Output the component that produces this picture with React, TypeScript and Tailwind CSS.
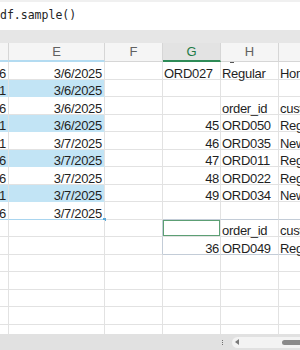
import React from "react";

type Row = {
  d?: string;
  e?: string;
  blue?: boolean;
  g?: string;
  gLeft?: boolean;
  h?: string;
  i?: string;
  active?: boolean;
};

const rows: Row[] = [
  { d: "6", e: "3/6/2025", g: "ORD027", gLeft: true, h: "Regular", i: "Home Decor" },
  { d: "1", e: "3/6/2025", blue: true },
  { d: "6", e: "3/6/2025", h: "order_id", i: "customer_type" },
  { d: "1", e: "3/6/2025", blue: true, g: "45", h: "ORD050", i: "Regular" },
  { d: "1", e: "3/7/2025", g: "46", h: "ORD035", i: "New" },
  { d: "6", e: "3/7/2025", blue: true, g: "47", h: "ORD011", i: "Regular" },
  { d: "6", e: "3/7/2025", g: "48", h: "ORD022", i: "Regular" },
  { d: "1", e: "3/7/2025", blue: true, g: "49", h: "ORD034", i: "New" },
  { d: "6", e: "3/7/2025" },
  { active: true, h: "order_id", i: "customer_type" },
  { g: "36", h: "ORD049", i: "Regular" },
  {},
  {},
  {},
  {},
  {},
];

const txt = "whitespace-nowrap leading-[13px] mb-[-1px]";

function DataRow({ r, idx }: { r: Row; idx: number }) {
  const inSel = idx <= 8;
  const lastSel = idx === 8;
  const boxTop = idx === 8; // row above the output box
  const inBox = idx === 9 || idx === 10;
  const boxBottom = idx === 10;
  const fill = inSel ? (r.blue ? "bg-[#c2e4f5]" : "bg-white") : "bg-white";
  const selBorder = lastSel ? "border-b-[#a9d5ef]" : r.blue ? "border-b-[#c2e4f5]" : "border-b-[#e2e2e2]";
  const rightBorder = boxTop || boxBottom ? "border-b-[#c3ccd7]" : "border-b-[#e2e2e2]";

  return (
    <div className="flex h-[17.5px] shrink-0">
      <div
        className={`w-[9px] shrink-0 border-r border-b border-r-[#e2e2e2] ${selBorder} ${fill} flex items-end justify-end overflow-x-clip pr-[2px]`}
      >
        <span className={txt}>{r.d}</span>
      </div>
      <div
        className={`relative w-[96px] shrink-0 border-r border-b border-r-[#e2e2e2] ${selBorder} ${fill} flex items-end justify-end pr-[2px]`}
      >
        <span className={txt}>{r.e}</span>
        {lastSel && (
          <div className="absolute right-[-2px] bottom-[-2px] w-[3px] h-[3px] bg-[#5aa7d8]" />
        )}
      </div>
      <div
        className={`w-[58px] shrink-0 border-r border-b border-b-[#e2e2e2] ${inBox ? "border-r-[#c3ccd7]" : "border-r-[#e2e2e2]"} bg-white`}
      />
      <div
        className={`w-[58px] shrink-0 border-r border-b border-r-[#e2e2e2] ${rightBorder} flex items-end overflow-x-clip ${r.gLeft ? "justify-start pl-[1px]" : "justify-end pr-[1px]"} ${r.active ? "shadow-[inset_0_0_0_1px_#5c9f74]" : ""}`}
      >
        <span className={txt}>{r.g}</span>
      </div>
      <div
        className={`w-[58px] shrink-0 border-r border-b border-r-[#e2e2e2] ${rightBorder} flex items-end overflow-x-clip pl-[1px]`}
      >
        <span className={txt}>{r.h}</span>
      </div>
      <div className={`flex-1 min-w-0 border-b ${rightBorder} flex items-end overflow-x-clip pl-[1px]`}>
        <span className={txt}>{r.i}</span>
      </div>
    </div>
  );
}

export default function App() {
  return (
    <div className="w-[300px] h-[350px] overflow-hidden flex flex-col bg-white font-['Liberation_Sans',Arial,sans-serif] text-[13px] tracking-[-0.3px] text-[#1f1f1f]">
      {/* formula bar */}
      <div className="h-[30px] shrink-0 bg-white border-t-[2px] border-t-[#f0f0f0]">
        <div className="pt-[6px] font-['DejaVu_Sans_Mono',monospace] text-[11.5px] leading-[14px] tracking-normal text-[#242424] whitespace-nowrap">
          df.sample()
        </div>
      </div>
      <div className="h-[13px] shrink-0 bg-[#e6e6e6]" />

      {/* column headers */}
      <div className="relative z-10 flex h-[19px] shrink-0 bg-[#e6e6e6] text-[13px] tracking-normal text-[#616161]">
        <div className="w-[9px] shrink-0 bg-[#f5f5f5] border-r border-r-[#d6d6d6] border-b-2 border-b-[#b3dbf1]" />
        <div className="w-[96px] shrink-0 bg-[#f5f5f5] border-r border-r-[#d6d6d6] border-b-2 border-b-[#b3dbf1] flex items-center justify-center pt-[1px]">
          E
        </div>
        <div className="w-[58px] shrink-0 bg-[#f5f5f5] border-r border-r-[#d6d6d6] border-b border-b-[#d6d6d6] flex items-center justify-center">
          F
        </div>
        <div className="w-[58px] shrink-0 bg-[#e3e3e3] border-r border-r-[#d6d6d6] border-b-2 border-b-[#2e8b57] flex items-center justify-center pt-[1px] text-[#1d7a46]">
          G
        </div>
        <div className="relative w-[58px] shrink-0 bg-[#f5f5f5] border-r border-r-[#d6d6d6] border-b border-b-[#d6d6d6] flex items-center justify-center">
          H
          <div className="absolute left-[9px] bottom-[-2px] w-[4px] h-[1px] bg-[#555555]" />
        </div>
        <div className="flex-1 bg-[#f5f5f5] border-b border-b-[#d6d6d6]" />
      </div>

      {/* grid */}
      <div className="flex-1 min-h-0 overflow-hidden flex flex-col">
        {rows.map((r, idx) => (
          <DataRow key={idx} r={r} idx={idx} />
        ))}
      </div>

      {/* bottom bar */}
      <div className="h-[16px] shrink-0 bg-[#e1e1e1] flex items-center">
        <div className="ml-[219px] w-[6px] flex flex-col items-center gap-[1px]">
          <div className="w-[1px] h-[1px] bg-[#707070]" />
          <div className="w-[1px] h-[1px] bg-[#707070]" />
          <div className="w-[1px] h-[1px] bg-[#707070]" />
        </div>
        <div className="ml-[7px] flex-1 h-[11px] rounded-l-full bg-[#f3f3f3] flex items-center pl-[3px]">
          <div className="w-0 h-0 border-y-[3px] border-y-transparent border-r-[4px] border-r-[#7a7a7a]" />
          <div className="ml-auto w-[18px] h-[5px] rounded-l-full bg-[#8a8a8a]" />
        </div>
      </div>
    </div>
  );
}
